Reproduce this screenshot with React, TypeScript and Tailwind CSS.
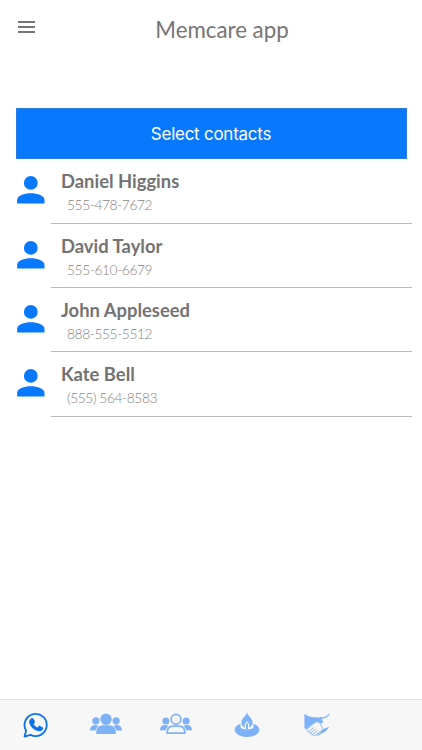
import React from 'react';

interface Contact {
  name: string;
  phone: string;
}

const CONTACTS: Contact[] = [
  { name: 'Daniel Higgins', phone: '555-478-7672' },
  { name: 'David Taylor', phone: '555-610-6679' },
  { name: 'John Appleseed', phone: '888-555-5512' },
  { name: 'Kate Bell', phone: '(555) 564-8583' },
];

const MenuIcon = () => (
  <svg className="block h-3 w-[17px]" viewBox="0 0 17 12" stroke="#757575" strokeWidth="1.8">
    <path d="M0 1h17M0 6h17M0 11h17" />
  </svg>
);

const PersonIcon = () => (
  <svg className="block h-7 w-7" viewBox="0 0 28 28" fill="#0878ff">
    <circle cx="13.8" cy="6.9" r="6.9" />
    <path d="M.1 27.5v-3.6c0-4.4 7-6.700 13.700-6.700s13.700 2.300 13.700 6.700v3.600z" />
  </svg>
);

const CallIcon = () => (
  <svg className="block h-[26px] w-[26px]" viewBox="0 0 26 26">
    <path
      d="M1.500 24.600 3.100 18.700A11.100 11.100 0 1 1 7.600 22.900Z"
      fill="none"
      stroke="#0b72ee"
      strokeWidth="1.800"
      strokeLinejoin="round"
    />
    <path
      d="M8 6.500c.8-.8 2-.7 2.500.2l1.300 2.500c.3.700.1 1.200-.3 1.700l-.9 1c.9 1.600 2.200 2.800 3.900 3.600l1.100-1.200c.4-.5.900-.6 1.500-.3l2.400 1.300c.9.5.8 1.400.3 2.100-1.300 1.900-3.600 2.100-5.900 1.300-3.600-1.300-6.200-4-7.500-7.300C5.700 9.600 6.300 8 8 6.500Z"
      fill="#0b72ee"
    />
  </svg>
);

const GroupIcon = () => (
  <svg className="block h-6 w-8" viewBox="0 0 32 24" fill="#7eb2f8">
    <circle cx="5.900" cy="7.800" r="3.600" />
    <circle cx="26.100" cy="7.800" r="3.600" />
    <path d="M0 17.500c0-3.500 2-5.500 5.500-5.500 1.200 0 2.200.3 3 .9C7 14 6 15.500 5.700 17.500z" />
    <path d="M32 17.500c0-3.500-2-5.500-5.500-5.500-1.200 0-2.200.3-3 .9 1.500 1.100 2.500 2.600 2.800 4.600z" />
    <circle cx="16" cy="6.200" r="5.700" />
    <path d="M6.200 21v-1.800c0-4.500 3-6.900 7.100-6.900h5.400c4.100 0 7.100 2.400 7.100 6.900V21z" />
  </svg>
);

const GroupOutlineIcon = () => (
  <svg className="block h-6 w-8" viewBox="0 0 32 24" fill="#7eb2f8">
    <circle cx="5.900" cy="8" r="3.500" />
    <circle cx="26.100" cy="8" r="3.500" />
    <path d="M0 17.300c0-3.500 2-5.300 5.500-5.300 1.200 0 2.200.3 3 .9C7 14 6 15.400 5.700 17.300z" />
    <path d="M32 17.300c0-3.500-2-5.300-5.500-5.300-1.200 0-2.200.3-3 .9 1.500 1.100 2.500 2.500 2.800 4.400z" />
    <g fill="none" stroke="#7eb2f8" strokeWidth="1.700">
      <circle cx="16" cy="6.200" r="4.900" />
      <path d="M7.200 20.200v-1c0-4 2.700-6 6.300-6h5c3.600 0 6.300 2 6.300 6v1z" />
    </g>
  </svg>
);

const CandleIcon = () => (
  <svg className="block h-[26px] w-[26px]" viewBox="0 0 26 26" fill="#7eb2f8">
    <ellipse cx="13" cy="17.800" rx="12.300" ry="7.200" />
    <path
      d="M6.500 9.800h13V15c0 3.200-13 3.200-13 0z"
      fill="#f7f7f7"
    />
    <path d="M13 .3c.4 3.600 5.600 5.900 5.600 10.200 0 2.400-1.300 4.200-3.300 5.200h-4.600c-2-1-3.300-2.800-3.300-5.200C7.400 6.200 12.600 3.900 13 .3Z" />
    <path d="M13 8.700c.3 1.400 2.300 2.300 2.300 4.300v3.500h-4.600V13c0-2 2-2.900 2.300-4.300Z" fill="#f7f7f7" />
    <path d="M13 10.500c.2.800 1 1.200 1 2.200v4.800h-2v-4.800c0-1 .8-1.400 1-2.200Z" />
  </svg>
);

const HandshakeIcon = () => (
  <svg className="block h-[26px] w-[26px]" viewBox="0 0 26 26" fill="#7eb2f8">
    <path d="M.4 2c3.600 2.300 6.600 3.300 10 3.300l6 .2 1.900 2.300.8 2.600c-.9.900-2.200.9-3.200.3l-3.500-1.200-3.500 2.300-6.300 5.100-2.200-.7z" />
    <path d="M16 5.700c4.500 1 6.200-.6 9.400-3.600" fill="none" stroke="#7eb2f8" strokeWidth="1.300" />
    <path d="M25.400 14.600 22.200 19l-4 2.300-4 2.200-2.400.3 4.500-3.100 2.700-3.400z" />
    {/* Clasped fingers */}
    <path
      d="M3.300 16.800 8.900 12l3.500-2.300 3.700 1.200 2.400 5.300-.9 2.600-7.200 4.700c-1.100.4-1.900-.2-1.600-1.200-1.300.6-2.500-.1-2-1.300-1.300.4-2.200-.5-1.600-1.600-1.900.4-2.800-1.400-1.900-2.600Z"
      fill="#f7f7f7"
      stroke="#7eb2f8"
      strokeWidth=".9"
    />
    <path
      d="m5.200 19.400 4.300-3.800M6.800 21l4.900-4.100M8.800 22.300l5-4"
      fill="none"
      stroke="#7eb2f8"
      strokeWidth=".9"
    />
  </svg>
);

const TABS = [
  { id: 'calls', icon: <CallIcon /> },
  { id: 'group', icon: <GroupIcon /> },
  { id: 'circle', icon: <GroupOutlineIcon /> },
  { id: 'candle', icon: <CandleIcon /> },
  { id: 'support', icon: <HandshakeIcon /> },
];

const ContactRow: React.FC<{ contact: Contact }> = ({ contact }) => (
  <li className="flex h-[64.4px]">
    <div className="w-[51px] pt-[17px] pl-[17px]">
      <PersonIcon />
    </div>
    <div className="mr-[10px] flex-1 border-b border-[#b9b9b9] pt-[10px] pl-[10px]">
      <div className="text-[18.4px] leading-6 font-bold text-[#737373]">{contact.name}</div>
      <div className="pt-[2px] pl-[6px] text-[13.8px] leading-5 font-light tracking-[-0.42px] text-[#858585]">
        {contact.phone}
      </div>
    </div>
  </li>
);

export default function App() {
  return (
    <div className="flex h-[750px] w-[422px] flex-col overflow-hidden bg-white font-['Lato',sans-serif]">
      <header className="grid h-[108px] grid-cols-[51px_1fr_29px] items-start">
        <button className="pt-[21px] pl-[18px]" aria-label="Menu">
          <MenuIcon />
        </button>
        <h1 className="pt-[15px] text-center text-[22.3px] leading-[30px] text-[#757575]">
          Memcare app
        </h1>
      </header>

      <button className="mr-[15.5px] ml-[15.5px] h-[51px] shrink-0 border border-[#2b7de6] bg-[#0878ff] pt-[2px] font-['Inter',sans-serif] text-[17px] tracking-[-0.25px] text-white">
        Select contacts
      </button>

      <ul className="flex-1 pt-[0.3px]">
        {CONTACTS.map((contact) => (
          <ContactRow key={contact.name} contact={contact} />
        ))}
      </ul>

      {/* Bottom tabs, the sixth slot stays empty */}
      <nav className="grid h-[51px] grid-cols-6 border-t border-[#e2e2e2] bg-[#f7f7f7] pl-[1px]">
        {TABS.map((tab) => (
          <button key={tab.id} className="flex items-center justify-center">
            {tab.icon}
          </button>
        ))}
      </nav>
    </div>
  );
}
